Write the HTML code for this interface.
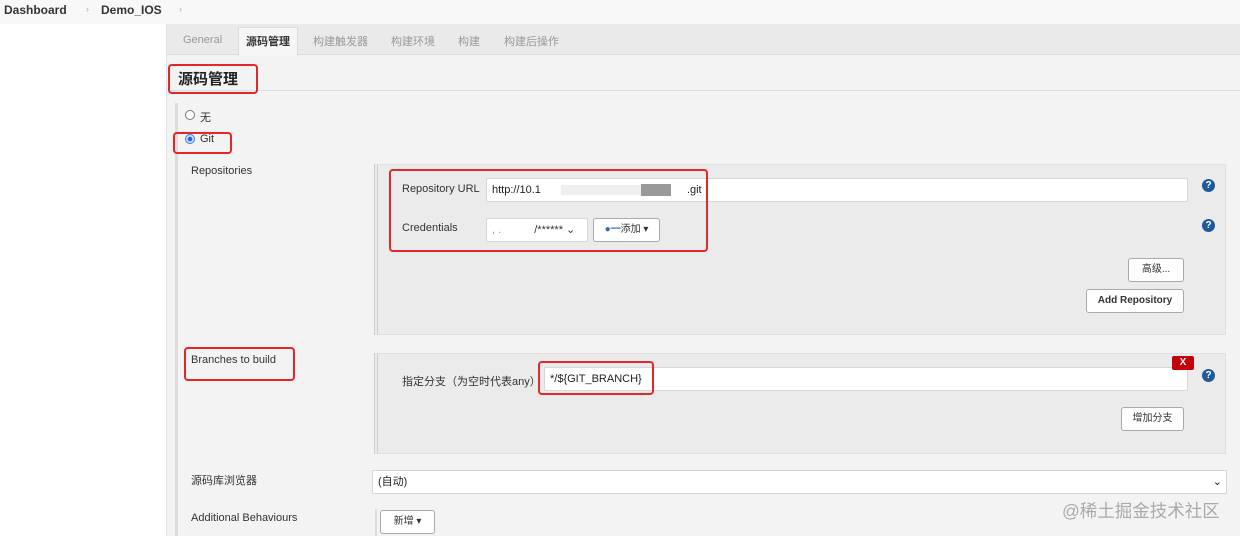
<!DOCTYPE html>
<html><head><meta charset="utf-8"><style>
body{margin:0;width:1240px;height:536px;overflow:hidden;background:#fff;font-family:"Liberation Sans","Noto Sans CJK SC",sans-serif;font-size:11px;color:#333;position:relative}
.a{position:absolute}
.red{position:absolute;border:2px solid #e0282b;border-radius:4px;box-sizing:border-box}
.inp{position:absolute;background:#fff;border:1px solid #d6d6d6;border-radius:2px;box-sizing:border-box;padding-left:5px;font-size:11px;color:#222}
.btn{position:absolute;background:#fff;border:1px solid #aaa;border-radius:3px;box-sizing:border-box;font-size:10px;font-weight:bold;text-align:center;color:#333}
.q{position:absolute;width:13px;height:13px;border-radius:50%;background:#1f5a9c;color:#fff;font-size:10px;font-weight:bold;text-align:center;line-height:13px}
.box{position:absolute;background:#ebebeb;border:1px solid #e0e0e0;border-left:4px double #ccc;box-sizing:border-box}
</style></head><body>
<div class="a" style="left:0;top:0;width:1240px;height:24px;background:#f8f8f8"></div>
<div class="a" style="left:4px;top:3px;font-size:12px;font-weight:bold;color:#333">Dashboard</div>
<div class="a" style="left:86px;top:4px;font-size:9px;color:#aaa">›</div>
<div class="a" style="left:101px;top:3px;font-size:12px;font-weight:bold;color:#333">Demo_IOS</div>
<div class="a" style="left:179px;top:4px;font-size:9px;color:#aaa">›</div>
<div class="a" style="left:166px;top:24px;width:1074px;height:512px;background:#f3f3f3;border-left:1px solid #e2e2e2"></div>
<div class="a" style="left:167px;top:24px;width:1073px;height:30px;background:#eaeaea;border-bottom:1px solid #ddd"></div>
<div class="a" style="left:238px;top:27px;width:58px;height:28px;background:#f6f6f6;border:1px solid #ddd;border-bottom:none"></div>
<div class="a" style="left:183px;top:34px;color:#999">General</div>
<div class="a" style="left:246px;top:33px;font-weight:bold;color:#333">源码管理</div>
<div class="a" style="left:313px;top:33px;color:#999">构建触发器</div>
<div class="a" style="left:391px;top:33px;color:#999">构建环境</div>
<div class="a" style="left:458px;top:33px;color:#999">构建</div>
<div class="a" style="left:504px;top:33px;color:#999">构建后操作</div>
<div class="a" style="left:178px;top:68px;font-size:15px;font-weight:bold;color:#222">源码管理</div>
<div class="a" style="left:167px;top:90px;width:1073px;height:1px;background:#ddd"></div>
<div class="red" style="left:168px;top:64px;width:90px;height:30px"></div>
<div class="a" style="left:175px;top:103px;width:3px;height:433px;background:#ddd"></div>
<div class="a" style="left:185px;top:110px;width:8px;height:8px;border:1px solid #777;border-radius:50%;background:#fff"></div>
<div class="a" style="left:200px;top:109px">无</div>
<div class="a" style="left:185px;top:134px;width:8px;height:8px;border:1px solid #3b7ddd;border-radius:50%;background:radial-gradient(#1a66e0 35%,#cfe0fa 45%)"></div>
<div class="a" style="left:200px;top:133px">Git</div>
<div class="red" style="left:173px;top:132px;width:59px;height:22px"></div>
<div class="a" style="left:191px;top:165px">Repositories</div>
<div class="box" style="left:374px;top:164px;width:852px;height:171px"></div>
<div class="a" style="left:402px;top:183px">Repository URL</div>
<div class="inp" style="left:486px;top:178px;width:702px;height:24px;line-height:22px">http://10.1<span style="display:inline-block;width:80px;height:10px;background:#eee;margin-left:20px;vertical-align:middle"></span><span style="display:inline-block;width:30px;height:12px;background:#999;vertical-align:middle"></span><span style="margin-left:16px">.git</span></div>
<div class="q" style="left:1202px;top:179px">?</div>
<div class="a" style="left:402px;top:222px">Credentials</div>
<div class="inp" style="left:486px;top:218px;width:102px;height:24px;line-height:22px;color:#999">,  .        <span style="color:#333;margin-left:30px">/******</span> <span style="color:#333">⌄</span></div>
<div class="btn" style="left:593px;top:218px;width:67px;height:24px;line-height:22px;font-weight:normal"><span style="color:#3a6cb0">●━</span>添加 ▾</div>
<div class="q" style="left:1202px;top:219px">?</div>
<div class="red" style="left:389px;top:169px;width:319px;height:83px"></div>
<div class="btn" style="left:1128px;top:258px;width:56px;height:24px;line-height:22px;font-weight:normal">高级...</div>
<div class="btn" style="left:1086px;top:289px;width:98px;height:24px;line-height:22px">Add Repository</div>
<div class="a" style="left:191px;top:354px">Branches to build</div>
<div class="red" style="left:184px;top:347px;width:111px;height:34px"></div>
<div class="box" style="left:374px;top:353px;width:852px;height:101px"></div>
<div class="a" style="left:402px;top:373px">指定分支（为空时代表any）</div>
<div class="inp" style="left:544px;top:367px;width:644px;height:24px;line-height:22px">*/${GIT_BRANCH}</div>
<div class="red" style="left:538px;top:361px;width:116px;height:34px"></div>
<div class="a" style="left:1172px;top:356px;width:22px;height:14px;background:#c4000a;color:#fff;font-weight:bold;font-size:10px;text-align:center;line-height:14px;border-radius:2px">X</div>
<div class="q" style="left:1202px;top:369px">?</div>
<div class="btn" style="left:1121px;top:407px;width:63px;height:24px;line-height:22px;font-weight:normal">增加分支</div>
<div class="a" style="left:191px;top:472px">源码库浏览器</div>
<div class="inp" style="left:372px;top:470px;width:855px;height:24px;line-height:22px">(自动)<span style="position:absolute;right:4px;top:0">⌄</span></div>
<div class="a" style="left:191px;top:512px">Additional Behaviours</div>
<div class="a" style="left:375px;top:509px;width:2px;height:27px;background:#ddd"></div>
<div class="btn" style="left:380px;top:510px;width:55px;height:24px;line-height:22px;font-weight:normal">新增 ▾</div>
<div class="a" style="left:1062px;top:498px;font-size:17.5px;color:#aaa">@稀土掘金技术社区</div>
</body></html>
